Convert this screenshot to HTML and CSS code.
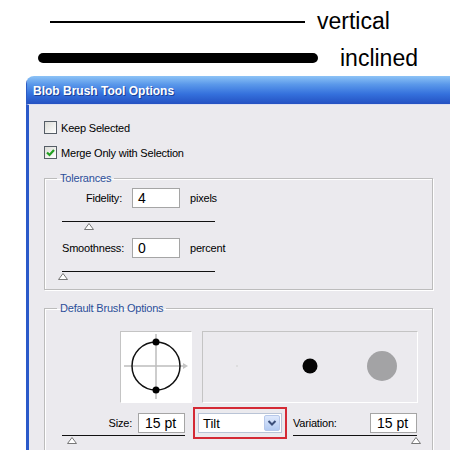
FILE: index.html
```html
<!DOCTYPE html>
<html lang="en">

<head>
    <meta charset="UTF-8">
    <meta name="viewport" content="width=device-width, initial-scale=1.0">
    <title>Blob Brush Tool Options</title>
    <link rel="stylesheet" href="styles.css">
</head>

<body>
    <div class="samples">
        <div class="sample sample-thin">
            <span class="stroke"></span>
            <span class="sample-label">vertical</span>
        </div>
        <div class="sample sample-thick">
            <span class="stroke"></span>
            <span class="sample-label">inclined</span>
        </div>
    </div>

    <div class="dialog">
        <div class="titlebar">Blob Brush Tool Options</div>

        <div class="dialog-body">
            <div class="check-row">
                <span class="checkbox"></span>
                <span>Keep Selected</span>
            </div>
            <div class="check-row">
                <span class="checkbox">
                    <svg width="11" height="11" viewBox="0 0 11 11">
                        <path d="M2 5.5 L4.5 8 L9 3" fill="none" stroke="#22a022" stroke-width="2.2"/>
                    </svg>
                </span>
                <span>Merge Only with Selection</span>
            </div>

            <fieldset class="group group-tolerances">
                <legend>Tolerances</legend>

                <div class="field-row">
                    <label class="field-label">Fidelity:</label>
                    <span class="input">4</span>
                    <span class="unit">pixels</span>
                </div>
                <div class="slider slider-tol">
                    <div class="track"></div>
                    <svg class="thumb thumb-fidelity" width="10" height="7" viewBox="0 0 10 7">
                        <path d="M5 0.5 L9.5 6.5 L0.5 6.5 Z" fill="#fff" stroke="#777"/>
                    </svg>
                </div>

                <div class="field-row">
                    <label class="field-label">Smoothness:</label>
                    <span class="input">0</span>
                    <span class="unit">percent</span>
                </div>
                <div class="slider slider-tol">
                    <div class="track"></div>
                    <svg class="thumb thumb-smooth" width="10" height="7" viewBox="0 0 10 7">
                        <path d="M5 0.5 L9.5 6.5 L0.5 6.5 Z" fill="#fff" stroke="#777"/>
                    </svg>
                </div>
            </fieldset>

            <fieldset class="group group-brush">
                <legend>Default Brush Options</legend>

                <div class="preview-row">
                    <div class="brush-shape">
                        <svg width="72" height="72" viewBox="0 0 72 72">
                            <line x1="4" y1="35" x2="64" y2="35" stroke="#bdbdbd" stroke-width="1.5"/>
                            <path d="M63 32 L68 35 L63 38 Z" fill="#c4c4c4"/>
                            <line x1="36" y1="3" x2="36" y2="68" stroke="#bdbdbd" stroke-width="1.5"/>
                            <circle cx="36" cy="35" r="24" fill="none" stroke="#111" stroke-width="1.5"/>
                            <circle cx="36" cy="11" r="3.5" fill="#000"/>
                            <circle cx="36" cy="59" r="3.5" fill="#000"/>
                        </svg>
                    </div>
                    <div class="brush-preview">
                        <svg width="216" height="72" viewBox="0 0 216 72">
                            <circle cx="35" cy="35" r="1" fill="#d8d8d8"/>
                            <circle cx="108" cy="35" r="7.5" fill="#050505"/>
                            <circle cx="180" cy="35" r="15" fill="#a3a3a5"/>
                        </svg>
                    </div>
                </div>

                <div class="brush-row">
                    <div class="brush-col col-size">
                        <div class="col-fields">
                            <label class="field-label">Size:</label>
                            <span class="input input-pt">15 pt</span>
                        </div>
                        <div class="slider slider-brush">
                            <div class="track"></div>
                            <svg class="thumb thumb-size" width="10" height="7" viewBox="0 0 10 7">
                                <path d="M5 0.5 L9.5 6.5 L0.5 6.5 Z" fill="#fff" stroke="#777"/>
                            </svg>
                        </div>
                    </div>

                    <div class="highlight">
                        <div class="select">
                            <span class="select-text">Tilt</span>
                            <span class="select-button">
                                <svg width="10" height="8" viewBox="0 0 10 8">
                                    <path d="M1.5 2 L5 5.5 L8.5 2" fill="none" stroke="#3b4f7a" stroke-width="2"/>
                                </svg>
                            </span>
                        </div>
                    </div>

                    <div class="brush-col col-variation">
                        <div class="col-fields">
                            <label class="field-label">Variation:</label>
                            <span class="input input-pt">15 pt</span>
                        </div>
                        <div class="slider slider-brush">
                            <div class="track"></div>
                            <svg class="thumb thumb-variation" width="10" height="7" viewBox="0 0 10 7">
                                <path d="M5 0.5 L9.5 6.5 L0.5 6.5 Z" fill="#fff" stroke="#777"/>
                            </svg>
                        </div>
                    </div>
                </div>
            </fieldset>
        </div>
    </div>
</body>

</html>
```

FILE: styles.css
```css
html,
body {
    margin: 0;
    padding: 0;
    background-color: #fff;
    overflow: hidden;
}

body {
    font-family: "Liberation Sans", Arial, sans-serif;
    font-size: 11px;
    letter-spacing: -0.2px;
    color: #000;
}

/* stroke samples above the dialog */
.samples {
    height: 76px;
}

.sample {
    display: flex;
    align-items: center;
    font-size: 23px;
    letter-spacing: 0;
}

.sample .stroke {
    display: block;
    background-color: #000;
}

.sample-thin {
    padding-left: 50px;
    padding-top: 5px;
    height: 33px;
}

.sample-thin .stroke {
    width: 255px;
    height: 2px;
    margin-right: 12px;
}

.sample-thick {
    padding-left: 38px;
    padding-top: 2px;
    height: 36px;
}

.sample-thick .stroke {
    width: 280px;
    height: 10px;
    border-radius: 5px;
    margin-right: 22px;
}

/* dialog window */
.dialog {
    margin-left: 26px;
    width: 440px;
    border-radius: 8px 8px 0 0;
    overflow: hidden;
}

.titlebar {
    height: 28px;
    line-height: 30px;
    padding-left: 6px;
    background: linear-gradient(#8dc3f6, #5a98ea 30%, #3470dc 65%, #2451c2);
    border-left: 1px solid #2d5bc4;
    color: #fff;
    font-weight: bold;
    font-size: 12px;
    letter-spacing: 0;
    text-shadow: 1px 1px 0 #1d3f95;
}

.dialog-body {
    height: 329px;
    padding: 16px 0 0 15px;
    background-color: #ebeaee;
    border-left: 3px solid #2b59c9;
    border-top: 1px solid #dcdff0;
}

.check-row {
    display: flex;
    align-items: center;
    height: 13px;
    margin-bottom: 12px;
}

.checkbox {
    width: 11px;
    height: 11px;
    border: 1px solid #555d66;
    background: linear-gradient(135deg, #dcdcd7, #fff);
    margin-right: 4px;
    display: flex;
    align-items: center;
    justify-content: center;
}

/* group boxes */
.group {
    width: 370px;
    margin: 0;
    padding: 3px 0 0 17px;
    border: 1px solid #bcbcbc;
    box-shadow: 1px 1px 0 #fff, inset 1px 1px 0 #fff;
}

.group legend {
    margin-left: -5px;
    padding: 0 3px;
    color: #2b4f9a;
    line-height: 14px;
}

.group-tolerances {
    padding-bottom: 1px;
}

.group-brush {
    margin-top: 11px;
    padding-top: 16px;
    height: 140px;
}

.field-row {
    display: flex;
    align-items: center;
    height: 20px;
}

.field-label {
    width: 60px;
    text-align: right;
    margin-right: 10px;
}

.input {
    box-sizing: border-box;
    width: 48px;
    height: 20px;
    line-height: 18px;
    padding-left: 5px;
    background-color: #fff;
    border: 1px solid #a5a5a5;
    font-size: 14px;
    letter-spacing: 0;
}

.unit {
    margin-left: 10px;
}

/* sliders */
.slider .track {
    border-top: 1px solid #111;
}

.thumb {
    display: block;
    margin-top: 1px;
}

.slider-tol {
    box-sizing: border-box;
    width: 153px;
    height: 30px;
    padding-top: 13px;
}

.thumb-fidelity {
    margin-left: 22px;
}

.thumb-smooth {
    margin-left: -4px;
}

/* brush options */
.preview-row {
    display: flex;
    gap: 10px;
    margin-left: 58px;
}

.brush-shape,
.brush-preview {
    box-sizing: border-box;
    height: 72px;
    border-top: 1px solid #c4c4c4;
    border-left: 1px solid #c4c4c4;
    border-bottom: 1px solid #fff;
    border-right: 1px solid #fff;
}

.brush-shape {
    width: 72px;
    background-color: #fff;
}

.brush-shape svg,
.brush-preview svg {
    display: block;
    margin: -1px 0 0 -1px;
}

.brush-preview {
    width: 216px;
}

.brush-row {
    display: flex;
    margin-top: 4px;
}

.brush-col {
    width: 123px;
    padding-top: 6px;
}

.col-fields {
    display: flex;
    align-items: center;
    height: 20px;
}

.input-pt {
    width: 47px;
    padding-left: 6px;
}

.col-size .col-fields {
    justify-content: flex-end;
}

.col-size .field-label {
    width: auto;
    margin-right: 6px;
}

.col-variation {
    width: 124px;
    margin-left: 6px;
}

.col-variation .col-fields {
    justify-content: space-between;
}

.col-variation .field-label {
    width: auto;
    margin-right: 0;
}

.slider-brush {
    padding-top: 2px;
}

.thumb-size {
    margin-left: 5px;
}

.thumb-variation {
    margin-left: 118px;
}

.highlight {
    box-sizing: border-box;
    width: 94px;
    height: 32px;
    margin-left: 8px;
    padding: 4px 3px;
    border: 2px solid #d42a35;
}

.select {
    display: flex;
    align-items: center;
    justify-content: space-between;
    height: 20px;
    box-sizing: border-box;
    background-color: #fff;
    border: 1px solid #b9c4d6;
    padding-left: 4px;
    font-size: 13px;
    letter-spacing: 0;
}

.select-button {
    display: flex;
    align-items: center;
    justify-content: center;
    width: 16px;
    height: 16px;
    margin-right: 1px;
    background: linear-gradient(#dfe9fc, #b3cbf2);
    border: 1px solid #b7c8ea;
    border-radius: 2px;
    box-sizing: border-box;
}
```
